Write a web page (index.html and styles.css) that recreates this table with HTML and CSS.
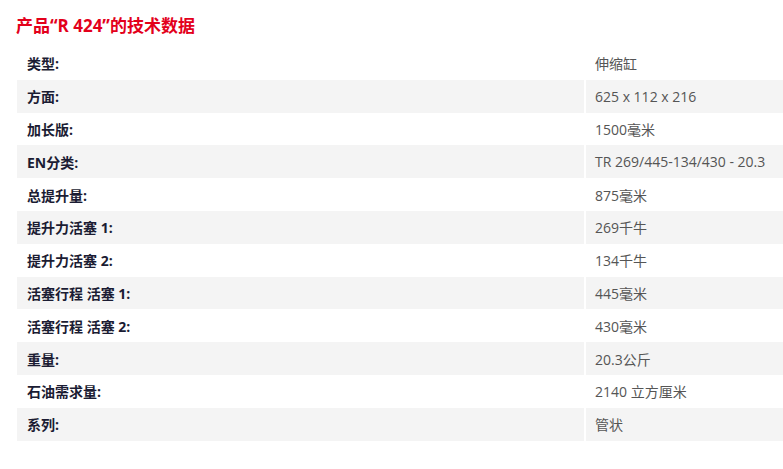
FILE: index.html
```html
<!DOCTYPE html>
<html lang="zh">
<head>
<meta charset="utf-8">
<link rel="stylesheet" href="styles.css">
</head>
<body>
<h2 class="title">产品“R 424”的技术数据</h2>
<div class="specs">
  <div class="row"><div class="label">类型:</div><div class="value">伸缩缸</div></div>
  <div class="row"><div class="label">方面:</div><div class="value">625 x 112 x 216</div></div>
  <div class="row"><div class="label">加长版:</div><div class="value">1500毫米</div></div>
  <div class="row"><div class="label">EN分类:</div><div class="value">TR 269/445-134/430 - 20.3</div></div>
  <div class="row"><div class="label">总提升量:</div><div class="value">875毫米</div></div>
  <div class="row"><div class="label">提升力活塞 1:</div><div class="value">269千牛</div></div>
  <div class="row"><div class="label">提升力活塞 2:</div><div class="value">134千牛</div></div>
  <div class="row"><div class="label">活塞行程 活塞 1:</div><div class="value">445毫米</div></div>
  <div class="row"><div class="label">活塞行程 活塞 2:</div><div class="value">430毫米</div></div>
  <div class="row"><div class="label">重量:</div><div class="value">20.3公斤</div></div>
  <div class="row"><div class="label">石油需求量:</div><div class="value">2140 立方厘米</div></div>
  <div class="row"><div class="label">系列:</div><div class="value">管状</div></div>
</div>
</body>
</html>
```
FILE: styles.css
```css
html, body {
  margin: 0;
  padding: 0;
  background: #fff;
}
body {
  font-family: "Open Sans", "Noto Sans CJK SC", sans-serif;
  font-size: 14px;
  padding: 14px 0 0 16px;
}
.title {
  margin: 0 0 9px 0;
  font-size: 17px;
  line-height: 24px;
  font-weight: 700;
  color: #e3001b;
}
.specs {
  margin-left: 1px;
  margin-right: -20px;
}
.row {
  display: grid;
  grid-template-columns: 567px 1fr;
  column-gap: 2px;
  height: 32.8px;
  align-items: center;
}
.row:nth-child(even) {
  background: linear-gradient(to right, #f4f4f4 567px, #fff 567px, #fff 569px, #f4f4f4 569px);
}
.label {
  padding-left: 10px;
  font-weight: 700;
  color: #1b1c33;
}
.value {
  padding-left: 9px;
  color: #555;
}
```
